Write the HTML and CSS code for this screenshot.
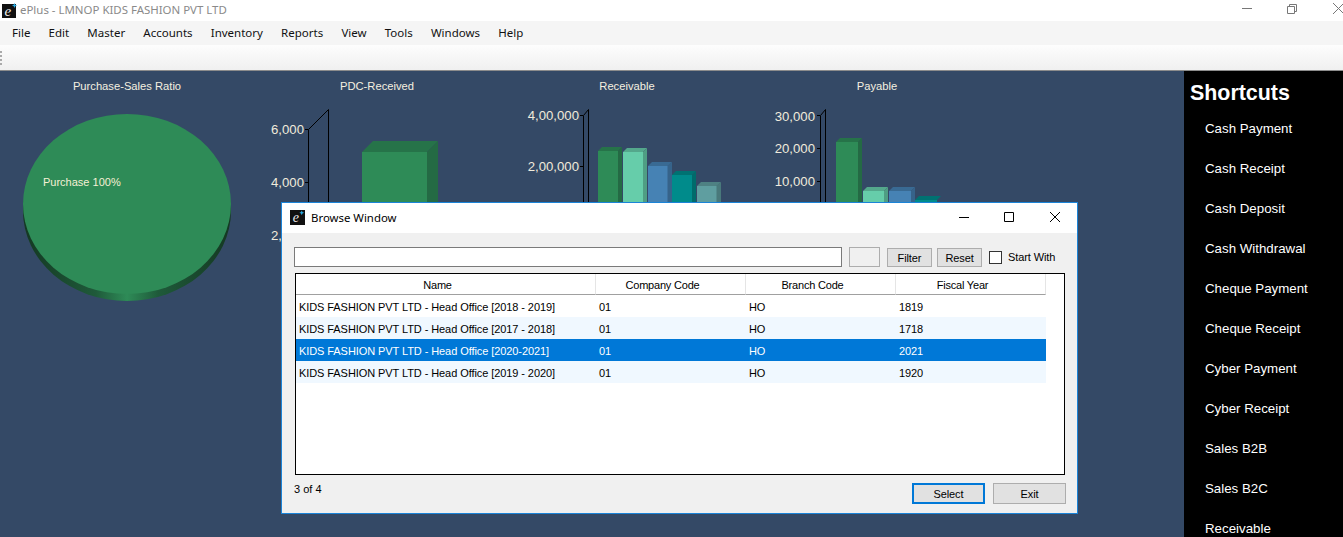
FILE: index.html
```html
<!DOCTYPE html>
<html lang="en">
<head>
    <meta charset="UTF-8">
    <meta name="viewport" content="width=device-width, initial-scale=1.0">
    <title>ePlus</title>
    <link rel="stylesheet" href="styles.css">
</head>
<body>

    <div class="titlebar">
        <svg class="app-icon" width="16" height="16" viewBox="0 0 16 16">
            <rect y="1" width="14" height="14" fill="#111"/>
            <text x="2.500" y="13" class="logo-e">e</text>
            <path d="M12.5 0l0.8 1.7 1.7 0.8-1.7 0.8-0.8 1.7-0.8-1.7-1.7-0.8 1.7-0.8z" fill="#29a9e0"/>
        </svg>
        <span class="app-title">ePlus - LMNOP KIDS FASHION PVT LTD</span>
        <div class="win-buttons">
            <svg width="12" height="12" viewBox="0 0 12 12"><path d="M2 5.500h10" stroke="#777" fill="none"/></svg>
            <svg width="12" height="12" viewBox="0 0 12 12"><path d="M1.500 3.500h7v7h-7zM3.500 3.500v-2h7v7h-2" stroke="#777" fill="none"/></svg>
            <svg width="12" height="12" viewBox="0 0 12 12"><path d="M1 0l11 11M12 0l-11 11" stroke="#777" fill="none"/></svg>
        </div>
    </div>

    <nav class="menubar">
        <span>File</span>
        <span>Edit</span>
        <span>Master</span>
        <span>Accounts</span>
        <span>Inventory</span>
        <span>Reports</span>
        <span>View</span>
        <span>Tools</span>
        <span>Windows</span>
        <span>Help</span>
    </nav>

    <div class="toolbar"><div class="gripper"></div></div>

    <div class="main">
        <div class="charts">
            <section class="chart">
                <h3>Purchase-Sales Ratio</h3>
                <svg width="250" height="345" viewBox="2 96 250 345">
                    <defs>
                        <linearGradient id="rim" x1="0" x2="1" y1="0" y2="0">
                            <stop offset="0" stop-color="#143822"/>
                            <stop offset="0.35" stop-color="#1f5a3a"/>
                            <stop offset="0.5" stop-color="#2e8b57"/>
                            <stop offset="0.65" stop-color="#1f5a3a"/>
                            <stop offset="1" stop-color="#143822"/>
                        </linearGradient>
                    </defs>
                    <ellipse cx="127" cy="211" rx="104" ry="90" fill="url(#rim)"/>
                    <ellipse cx="127" cy="204" rx="104" ry="90" fill="#2e8b57"/>
                    <text x="43" y="186" class="pie-label">Purchase 100%</text>
                </svg>
            </section>

            <section class="chart">
                <h3>PDC-Received</h3>
                <svg width="250" height="345" viewBox="252 96 250 345">
                    <path d="M308.500 240V129.500L328.500 109.500V240" class="axis"/>
                    <path d="M305 129.500h3M305 182.500h3" class="axis"/>
                    <text x="304" y="134" class="tick">6,000</text>
                    <text x="304" y="187" class="tick">4,000</text>
                    <text x="304" y="240" class="tick">2,000</text>
                    <path d="M362 152l11-11h65l-11 11z" fill="#267349"/>
                    <path d="M427 152l11-11v100h-11z" fill="#246a44"/>
                    <rect x="362" y="152" width="65" height="90" fill="#2e8b57"/>
                </svg>
            </section>

            <section class="chart">
                <h3>Receivable</h3>
                <svg width="250" height="345" viewBox="502 96 250 345">
                    <path d="M583.500 240V115.500L588.500 109.500V240" class="axis"/>
                    <path d="M580 115.500h3M580 166.500h3" class="axis"/>
                    <text x="579" y="120" class="tick">4,00,000</text>
                    <text x="579" y="171" class="tick">2,00,000</text>

                    <path d="M598 151l4-4h20l-4 4z" fill="#267349"/>
                    <path d="M618 151l4-4v90h-4z" fill="#246a44"/>
                    <rect x="598" y="151" width="20" height="86" fill="#2e8b57"/>

                    <path d="M623 152l4-4h20l-4 4z" fill="#54a88c"/>
                    <path d="M643 152l4-4v90h-4z" fill="#4f9e84"/>
                    <rect x="623" y="152" width="20" height="86" fill="#66cdaa"/>

                    <path d="M648 166l4-4h20l-4 4z" fill="#396a93"/>
                    <path d="M667 166l5-4v80h-5z" fill="#36638a"/>
                    <rect x="648" y="166" width="19.500" height="70" fill="#4682b4"/>

                    <path d="M672 175l4-4h20l-4 4z" fill="#007272"/>
                    <path d="M692 175l4-4v70h-4z" fill="#006b6b"/>
                    <rect x="672" y="175" width="20" height="60" fill="#008b8b"/>

                    <path d="M697 186l4-4h20l-4 4z" fill="#4e8183"/>
                    <path d="M716 186l5-4v60h-5z" fill="#49797b"/>
                    <rect x="697" y="186" width="19.500" height="50" fill="#5f9ea0"/>
                </svg>
            </section>

            <section class="chart">
                <h3>Payable</h3>
                <svg width="250" height="345" viewBox="752 96 250 345">
                    <path d="M820.500 240V115.500L825.500 109.500V240" class="axis"/>
                    <path d="M817 115.500h3M817 148.500h3M817 181.500h3" class="axis"/>
                    <text x="815" y="121" class="tick">30,000</text>
                    <text x="815" y="153" class="tick">20,000</text>
                    <text x="815" y="186" class="tick">10,000</text>

                    <path d="M836 142l4-4h22l-4 4z" fill="#267349"/>
                    <path d="M858 142l4-4v90h-4z" fill="#246a44"/>
                    <rect x="836" y="142" width="22" height="90" fill="#2e8b57"/>

                    <path d="M863 191l4-4h21l-4 4z" fill="#54a88c"/>
                    <path d="M884 191l4-4v40h-4z" fill="#4f9e84"/>
                    <rect x="863" y="191" width="21" height="40" fill="#66cdaa"/>

                    <path d="M889 191l4-4h22l-4 4z" fill="#396a93"/>
                    <path d="M911 191l4-4v40h-4z" fill="#36638a"/>
                    <rect x="889" y="191" width="22" height="40" fill="#4682b4"/>

                    <path d="M915 200l4-4h22l-4 4z" fill="#007272"/>
                    <rect x="915" y="200" width="22" height="30" fill="#008b8b"/>
                </svg>
            </section>
        </div>

        <aside class="shortcuts">
            <h2>Shortcuts</h2>
            <ul>
                <li>Cash Payment</li>
                <li>Cash Receipt</li>
                <li>Cash Deposit</li>
                <li>Cash Withdrawal</li>
                <li>Cheque Payment</li>
                <li>Cheque Receipt</li>
                <li>Cyber Payment</li>
                <li>Cyber Receipt</li>
                <li>Sales B2B</li>
                <li>Sales B2C</li>
                <li>Receivable</li>
            </ul>
        </aside>
    </div>

    <div class="browse-window">
        <div class="bw-title">
            <svg class="bw-icon" width="15" height="15" viewBox="0 0 16 16">
                <rect width="16" height="16" fill="#111"/>
                <text x="3" y="13" class="logo-e">e</text>
                <path d="M12.5 0.5l0.8 1.7 1.7 0.8-1.7 0.8-0.8 1.7-0.8-1.7-1.7-0.8 1.7-0.8z" fill="#29a9e0"/>
            </svg>
            <span>Browse Window</span>
            <div class="bw-controls">
                <svg width="12" height="12" viewBox="0 0 12 12"><path d="M2 6.500h10" stroke="#000" fill="none"/></svg>
                <svg width="12" height="12" viewBox="0 0 12 12"><path d="M1.500 1.500h9v9h-9z" stroke="#000" fill="none"/></svg>
                <svg width="12" height="12" viewBox="0 0 12 12"><path d="M1 1l10 10M11 1l-10 10" stroke="#000" fill="none"/></svg>
            </div>
        </div>

        <div class="bw-body">
            <div class="filter-row">
                <input type="text" class="search-box">
                <div class="blank-btn"></div>
                <button class="small-btn first">Filter</button>
                <button class="small-btn">Reset</button>
                <label class="start-with"><span class="check"></span>Start With</label>
            </div>

            <div class="grid-box">
                <table class="grid">
                    <thead>
                        <tr>
                            <th class="col-name">Name</th>
                            <th class="col-code">Company Code</th>
                            <th class="col-code">Branch Code</th>
                            <th class="col-code">Fiscal Year</th>
                        </tr>
                    </thead>
                    <tbody>
                        <tr>
                            <td>KIDS FASHION PVT LTD - Head Office [2018 - 2019]</td>
                            <td>01</td><td>HO</td><td>1819</td>
                        </tr>
                        <tr class="alt">
                            <td>KIDS FASHION PVT LTD - Head Office [2017 - 2018]</td>
                            <td>01</td><td>HO</td><td>1718</td>
                        </tr>
                        <tr class="selected">
                            <td>KIDS FASHION PVT LTD - Head Office [2020-2021]</td>
                            <td>01</td><td>HO</td><td>2021</td>
                        </tr>
                        <tr class="alt">
                            <td>KIDS FASHION PVT LTD - Head Office [2019 - 2020]</td>
                            <td>01</td><td>HO</td><td>1920</td>
                        </tr>
                    </tbody>
                </table>
            </div>

            <div class="bw-footer">
                <span class="count">3 of 4</span>
                <button class="foot-btn default">Select</button>
                <button class="foot-btn">Exit</button>
            </div>
            <div class="resize-grip"></div>
        </div>
    </div>

</body>
</html>
```

FILE: styles.css
```css
body {
    margin: 0;
    height: 537px;
    overflow: hidden;
    position: relative;
    font-family: "Liberation Sans", Arial, sans-serif;
    font-size: 11px;
    background-color: #344966;
}

.titlebar {
    height: 21px;
    padding: 0 0 2px 2px;
    box-sizing: border-box;
    background-color: #fff;
    display: flex;
    align-items: center;
    font-family: "Noto Sans", sans-serif;
    font-size: 11.450px;
    color: #8a8a8a;
}

.app-icon {
    margin: 2px 2px 0 0;
}

.logo-e {
    font-family: "Liberation Serif", serif;
    font-style: italic;
    font-size: 15px;
    fill: #eee;
}

.win-buttons {
    margin-left: auto;
    margin-right: -1px;
    margin-top: 1px;
    display: flex;
    align-self: flex-start;
    padding-top: 2px;
    gap: 34px;
}

.menubar {
    height: 24px;
    padding: 0 0 1px 12px;
    box-sizing: border-box;
    background-color: #f5f5f5;
    display: flex;
    align-items: center;
    gap: 18.200px;
    font-family: "Noto Sans", sans-serif;
    font-size: 11.500px;
    color: #111;
}

.toolbar {
    height: 25px;
    background: linear-gradient(#fdfdfd, #f0f0f0);
    border-bottom: 1px solid #8c8c8c;
    display: flex;
    align-items: center;
}

.gripper {
    width: 2px;
    height: 14px;
    background: repeating-linear-gradient(#aaa 0 2px, transparent 2px 4px);
}

.main {
    display: flex;
    height: 466px;
}

.charts {
    flex: 1;
    display: flex;
    padding-left: 2px;
    overflow: hidden;
}

.chart {
    width: 250px;
    flex-shrink: 0;
}

.chart h3 {
    margin: 0;
    height: 25px;
    line-height: 30px;
    text-align: center;
    font-size: 11.200px;
    font-weight: normal;
    color: #f5f0e0;
}

.chart svg {
    display: block;
}

.pie-label {
    font-size: 11px;
    fill: #f5f0d5;
}

.tick {
    font-size: 13.200px;
    fill: #f0ebdc;
    text-anchor: end;
}

.axis {
    fill: none;
    stroke: #000;
    stroke-width: 1;
}

.shortcuts {
    width: 159px;
    background-color: #000;
    color: #fff;
    overflow: hidden;
}

.shortcuts h2 {
    margin: 9px 0 0 6px;
    font-size: 21.400px;
    line-height: 26px;
}

.shortcuts ul {
    list-style: none;
    margin: 3px 0 0 21px;
    padding: 0;
}

.shortcuts li {
    height: 40px;
    line-height: 40px;
    font-size: 13.300px;
}

/* dialog sits over the charts */
.browse-window {
    position: absolute;
    left: 281px;
    top: 202px;
    width: 795px;
    height: 310px;
    border: 1px solid #1b84d8;
    background-color: #f0f0f0;
    color: #000;
}

.bw-title {
    height: 30px;
    padding: 0 0 2px 8px;
    box-sizing: border-box;
    background-color: #fff;
    display: flex;
    align-items: center;
    font-family: "Noto Sans", sans-serif;
    font-size: 11.400px;
}

.bw-icon {
    margin-right: 6px;
}

.bw-controls {
    margin-left: auto;
    display: flex;
    gap: 34px;
    margin-right: 16px;
}

.bw-body {
    position: relative;
    padding: 14px 12px 0 12px;
}

.filter-row {
    display: flex;
    align-items: center;
    height: 20px;
}

.search-box {
    width: 548px;
    height: 20px;
    box-sizing: border-box;
    border: 1px solid #7a7a7a;
    background: #fff;
    margin: 0;
}

.blank-btn {
    width: 31px;
    height: 20px;
    box-sizing: border-box;
    margin-left: 7px;
    border: 1px solid #adadad;
    background: #f0f0f0;
}

.small-btn {
    width: 45px;
    height: 19px;
    margin: 1px 0 0 5px;
    padding: 0;
    box-sizing: border-box;
    border: 1px solid #adadad;
    background: #e1e1e1;
    font-family: inherit;
    font-size: 11px;
    letter-spacing: -0.100px;
    color: #000;
}

.small-btn.first {
    margin-left: 7px;
}

.start-with {
    display: flex;
    align-items: center;
    margin-left: 7px;
    color: #000;
    letter-spacing: -0.100px;
}

.check {
    width: 11px;
    height: 11px;
    border: 1px solid #333;
    background: #fff;
    margin-right: 6px;
}

.grid-box {
    margin: 6px 0 0 1px;
    width: 768px;
    height: 200px;
    border: 1px solid #000;
    background: #fff;
}

.grid {
    border-collapse: separate;
    border-spacing: 0;
    table-layout: fixed;
    width: 750px;
    font-size: 11px;
    letter-spacing: -0.080px;
}

.col-name {
    width: 300px;
}

.col-code {
    width: 150px;
}

.grid th {
    height: 21px;
    padding: 2px 16px 0 0;
    box-sizing: border-box;
    font-weight: normal;
    letter-spacing: -0.200px;
    border-bottom: 1px solid #a0a0a0;
    border-right: 1px solid #e5e5e5;
}

.grid td {
    height: 22px;
    padding: 1px 0 0 3px;
    box-sizing: border-box;
    white-space: nowrap;
}

.grid tr.alt {
    background-color: #f0f8ff;
}

.grid tr.selected {
    background-color: #0078d7;
    color: #fff;
}

.bw-footer {
    display: flex;
    align-items: flex-start;
    margin-top: 8px;
}

.count {
    margin-top: -1px;
    line-height: 14px;
}

.foot-btn {
    width: 73px;
    height: 21px;
    box-sizing: border-box;
    padding: 0;
    border: 1px solid #adadad;
    background: #e1e1e1;
    font-family: inherit;
    font-size: 11px;
    letter-spacing: -0.100px;
    color: #000;
    margin-left: 8px;
}

.foot-btn.default {
    margin-left: auto;
    border: 2px solid #0078d7;
}

.bw-footer .foot-btn:last-child {
    margin-right: -1px;
}

.resize-grip {
    position: absolute;
    right: 1px;
    bottom: -52px;
    width: 9px;
    height: 9px;
    background: radial-gradient(circle, #b5b5b5 1px, transparent 1.2px) 0 0 / 3px 3px;
}
```
